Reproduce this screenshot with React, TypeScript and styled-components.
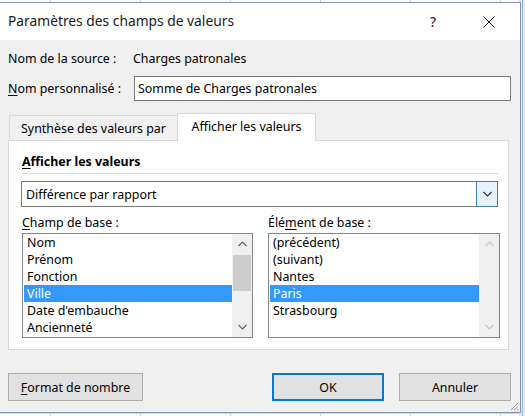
import React from "react";
import styled, { createGlobalStyle, css } from "styled-components";

const UI_FONT = `"Noto Sans", "Open Sans", "Liberation Sans", sans-serif`;

const GlobalStyle = createGlobalStyle`
  html, body {
    margin: 0;
    padding: 0;
    background: #ffffff;
  }
  body {
    font-family: ${UI_FONT};
    font-size: 12.4px;
    color: #000;
  }
  * { box-sizing: border-box; }
`;

/* Spreadsheet peeking out behind the dialog */
const Sheet = styled.div`
  width: 525px;
  height: 416px;
  overflow: hidden;
  padding-top: 2px;
  background-color: #ffffff;
  background-image:
    linear-gradient(to right, transparent 519px, #e4e8ee 519px, #e4e8ee 522px, #9fb3cc 522px, #9fb3cc 523px, #e4e8ee 523px),
    linear-gradient(to bottom, transparent 413px, #d4d4d4 413px, #d4d4d4 414px, transparent 414px),
    repeating-linear-gradient(to right, transparent 0 50px, #d4d4d4 50px 51px, transparent 51px 90px);
`;

const Dialog = styled.div`
  position: relative;
  width: 521px;
  height: 411px;
  background: #f0f0f0;
  border: 1px solid #7f95b3;
  border-left: none;
  display: flex;
  flex-direction: column;
`;

const TitleBar = styled.div`
  height: 37px;
  background: #ffffff;
  display: flex;
  align-items: center;
  padding-left: 8px;
  flex-shrink: 0;
`;

const Title = styled.div`
  flex: 1;
  font-size: 13.8px;
  color: #1a1a1a;
  padding-bottom: 2px;
`;

const TitleButton = styled.div<{ $gap: number }>`
  width: 46px;
  height: 37px;
  margin-right: ${(p) => p.$gap}px;
  display: flex;
  align-items: center;
  justify-content: center;
  font-size: 14px;
  color: #1a1a1a;
`;

const Body = styled.div`
  flex: 1;
  display: flex;
  flex-direction: column;
  padding: 0 0 0 8px;
`;

const FieldRow = styled.div<{ $top: number; $height: number }>`
  display: flex;
  align-items: center;
  margin-top: ${(p) => p.$top}px;
  height: ${(p) => p.$height}px;
`;

const Label = styled.span<{ $width?: number }>`
  display: inline-block;
  width: ${(p) => (p.$width ? `${p.$width}px` : "auto")};
  white-space: nowrap;
`;

const Mnemonic = styled.span`
  text-decoration: underline;
  text-underline-offset: 2px;
`;

const TextInput = styled.div`
  width: 377px;
  height: 25px;
  border: 1px solid #7a7a7a;
  background: #fff;
  display: flex;
  align-items: center;
  padding-left: 3px;
  white-space: nowrap;
`;

const TabStrip = styled.div`
  display: flex;
  align-items: flex-end;
  margin-top: 12px;
  height: 27px;
  padding-left: 1px;
  position: relative;
  z-index: 1;
`;

const Tab = styled.div<{ $active?: boolean; $width: number }>`
  width: ${(p) => p.$width}px;
  display: flex;
  align-items: center;
  justify-content: center;
  white-space: nowrap;
  border: 1px solid #d9d9d9;
  border-bottom: none;
  ${(p) =>
    p.$active
      ? css`
          height: 28px;
          margin-bottom: -1px;
          background: #ffffff;
          padding-bottom: 3px;
        `
      : css`
          height: 25px;
          background: #f0f0f0;
          border-right: none;
          padding-top: 1px;
        `}
`;

const Panel = styled.div`
  width: 501px;
  height: 210px;
  background: #ffffff;
  border: 1px solid #d9d9d9;
  padding: 12px 10px 0 13px;
  display: flex;
  flex-direction: column;
`;

const SectionHeading = styled.div`
  font-weight: bold;
  line-height: 17px;
  padding-bottom: 3px;
  border-bottom: 1px solid #dcdcdc;
`;

const Combo = styled.div`
  margin-top: 7px;
  margin-left: -1px;
  height: 26px;
  border: 1px solid #7a7a7a;
  display: flex;
  align-items: stretch;
`;

const ComboValue = styled.div`
  flex: 1;
  display: flex;
  align-items: center;
  padding-left: 4px;
`;

const ComboButton = styled.div`
  width: 22px;
  margin: -1px -1px -1px 0;
  background: #e5f1fb;
  border: 1px solid #3c7fb1;
  display: flex;
  align-items: center;
  justify-content: center;
`;

const Columns = styled.div`
  display: flex;
  gap: 15px;
  margin-top: 8px;
`;

const Column = styled.div`
  display: flex;
  flex-direction: column;
`;

const ColumnLabel = styled.div`
  height: 16px;
  line-height: 16px;
  margin-bottom: 2px;
`;

const ListBox = styled.div<{ $width: number }>`
  width: ${(p) => p.$width}px;
  height: 105px;
  border: 1px solid #828790;
  background: #fff;
  display: flex;
`;

const ListItems = styled.div`
  flex: 1;
  padding: 0 0 0 1px;
`;

const ListItem = styled.div<{ $selected?: boolean }>`
  height: 17px;
  line-height: 17px;
  padding-left: 3px;
  white-space: nowrap;
  background: ${(p) => (p.$selected ? "#3399ff" : "transparent")};
  color: ${(p) => (p.$selected ? "#ffffff" : "#000")};
`;

const ScrollBar = styled.div`
  width: 20px;
  background: #f0f0f0;
  display: flex;
  flex-direction: column;
  align-items: center;
`;

const ScrollArrow = styled.div`
  height: 20px;
  width: 100%;
  display: flex;
  align-items: center;
  justify-content: center;
`;

const ScrollTrack = styled.div`
  flex: 1;
  width: 100%;
  padding: 1px 1px 0 1px;
`;

const ScrollThumb = styled.div`
  height: 36px;
  background: #cdcdcd;
`;

const ButtonRow = styled.div`
  display: flex;
  margin-top: 23px;
  height: 28px;
`;

const Button = styled.div<{ $width: number; $default?: boolean }>`
  width: ${(p) => p.$width}px;
  height: 28px;
  display: flex;
  align-items: center;
  justify-content: center;
  background: #e1e1e1;
  border: ${(p) => (p.$default ? "2px solid #0078d7" : "1px solid #adadad")};
  white-space: nowrap;
`;

const Spacer = styled.div<{ $width: number }>`
  width: ${(p) => p.$width}px;
`;

const Grip = styled.svg`
  position: absolute;
  right: 1px;
  bottom: 1px;
`;

const Chevron = ({ up, color }: { up?: boolean; color: string }) => (
  <svg width="9" height="6" viewBox="0 0 9 6">
    <polyline
      points={up ? "0.5,5 4.5,1 8.5,5" : "0.5,1 4.5,5 8.5,1"}
      fill="none"
      stroke={color}
      strokeWidth="1.2"
    />
  </svg>
);

const baseFields = ["Nom", "Prénom", "Fonction", "Ville", "Date d'embauche", "Ancienneté"];
const baseItems = ["(précédent)", "(suivant)", "Nantes", "Paris", "Strasbourg"];

export default function App() {
  return (
    <>
      <GlobalStyle />
      <Sheet>
        <Dialog>
          <TitleBar>
            <Title>Paramètres des champs de valeurs</Title>
            <TitleButton $gap={10}>?</TitleButton>
            <TitleButton $gap={8}>
              <svg width="12" height="12" viewBox="0 0 12 12">
                <path d="M0.5 0.5 L11.5 11.5 M11.5 0.5 L0.5 11.5" stroke="#1a1a1a" strokeWidth="1" />
              </svg>
            </TitleButton>
          </TitleBar>
          <Body>
            <FieldRow $top={8} $height={20}>
              <Label $width={125}>Nom de la source :</Label>
              <Label>Charges patronales</Label>
            </FieldRow>
            <FieldRow $top={8} $height={25}>
              <Label $width={126}>
                <Mnemonic>N</Mnemonic>om personnalisé :
              </Label>
              <TextInput>Somme de Charges patronales</TextInput>
            </FieldRow>
            <TabStrip>
              <Tab $width={168}>Synthèse des valeurs par</Tab>
              <Tab $width={139} $active>
                Afficher les valeurs
              </Tab>
            </TabStrip>
            <Panel>
              <SectionHeading>
                <Mnemonic>A</Mnemonic>fficher les valeurs
              </SectionHeading>
              <Combo>
                <ComboValue>Différence par rapport</ComboValue>
                <ComboButton>
                  <Chevron color="#333" />
                </ComboButton>
              </Combo>
              <Columns>
                <Column>
                  <ColumnLabel>
                    <Mnemonic>C</Mnemonic>hamp de base :
                  </ColumnLabel>
                  <ListBox $width={231}>
                    <ListItems>
                      {baseFields.map((f) => (
                        <ListItem key={f} $selected={f === "Ville"}>
                          {f}
                        </ListItem>
                      ))}
                    </ListItems>
                    <ScrollBar>
                      <ScrollArrow>
                        <Chevron up color="#606060" />
                      </ScrollArrow>
                      <ScrollTrack>
                        <ScrollThumb />
                      </ScrollTrack>
                      <ScrollArrow>
                        <Chevron color="#606060" />
                      </ScrollArrow>
                    </ScrollBar>
                  </ListBox>
                </Column>
                <Column>
                  <ColumnLabel>
                    Élé<Mnemonic>m</Mnemonic>ent de base :
                  </ColumnLabel>
                  <ListBox $width={232}>
                    <ListItems>
                      {baseItems.map((f) => (
                        <ListItem key={f} $selected={f === "Paris"}>
                          {f}
                        </ListItem>
                      ))}
                    </ListItems>
                    <ScrollBar>
                      <ScrollArrow>
                        <Chevron up color="#c8c8c8" />
                      </ScrollArrow>
                      <ScrollTrack />
                      <ScrollArrow>
                        <Chevron color="#c8c8c8" />
                      </ScrollArrow>
                    </ScrollBar>
                  </ListBox>
                </Column>
              </Columns>
            </Panel>
            <ButtonRow>
              <Button $width={135}>
                <Mnemonic>F</Mnemonic>ormat de nombre
              </Button>
              <Spacer $width={129} />
              <Button $width={112} $default>
                OK
              </Button>
              <Spacer $width={15} />
              <Button $width={112}>Annuler</Button>
            </ButtonRow>
          </Body>
          <Grip width="10" height="10" viewBox="0 0 10 10">
            <path d="M9 2 L2 9 M9 5 L5 9 M9 8 L8 9" stroke="#a0a0a0" strokeWidth="1" />
          </Grip>
        </Dialog>
      </Sheet>
    </>
  );
}
